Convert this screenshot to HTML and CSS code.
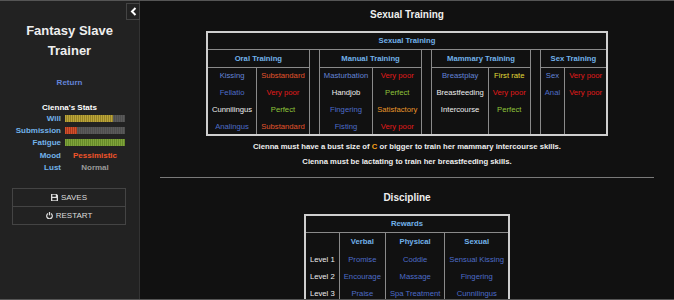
FILE: index.html
```html
<!DOCTYPE html>
<html lang="en">
<head>
    <meta charset="UTF-8">
    <meta name="viewport" content="width=device-width, initial-scale=1.0">
    <title>Fantasy Slave Trainer</title>
    <link rel="stylesheet" href="styles.css">
</head>
<body>

<div class="page">
    <aside class="ui-bar">
        <button class="ui-bar-toggle" title="Toggle">
            <svg width="7" height="9" viewBox="0 0 7 9"><polyline points="5.5,1 2,4.5 5.5,8" fill="none" stroke="#fff" stroke-width="2"/></svg>
        </button>

        <h1 class="story-title">Fantasy Slave<br>Trainer</h1>

        <a class="return-link" href="#">Return</a>

        <div class="stats">
            <h3>Cienna's Stats</h3>
            <div class="stat-grid">
                <span class="stat-label">Will</span>
                <span class="bar"><span class="fill will" style="width: 80%"></span></span>

                <span class="stat-label">Submission</span>
                <span class="bar"><span class="fill submission" style="width: 20%"></span></span>

                <span class="stat-label">Fatigue</span>
                <span class="bar"><span class="fill fatigue" style="width: 100%"></span></span>

                <span class="stat-label">Mood</span>
                <span class="stat-value mood">Pessimistic</span>

                <span class="stat-label">Lust</span>
                <span class="stat-value lust">Normal</span>
            </div>
        </div>

        <nav class="menu">
            <a href="#">
                <svg width="7" height="7" viewBox="0 0 8 8"><path d="M0 0h6.5L8 1.5V8H0z" fill="#ddd"/><rect x="1.5" y="0.8" width="4" height="2.4" fill="#222"/><rect x="1.5" y="4.6" width="5" height="2.6" fill="#222"/></svg>
                SAVES
            </a>
            <a href="#">
                <svg width="7" height="7" viewBox="0 0 8 8"><path d="M2.3 1.8A3.2 3.2 0 1 0 5.7 1.8" fill="none" stroke="#ddd" stroke-width="1.4"/><line x1="4" y1="0" x2="4" y2="3.8" stroke="#ddd" stroke-width="1.4"/></svg>
                RESTART
            </a>
        </nav>
    </aside>

    <main class="passage">
        <h2>Sexual Training</h2>

        <table class="training">
            <tr>
                <th class="table-title" colspan="11">Sexual Training</th>
            </tr>
            <tr>
                <th class="group-head" colspan="2">Oral Training</th>
                <td class="spacer" rowspan="5"></td>
                <th class="group-head" colspan="2">Manual Training</th>
                <td class="spacer" rowspan="5"></td>
                <th class="group-head" colspan="2">Mammary Training</th>
                <td class="spacer" rowspan="5"></td>
                <th class="group-head" colspan="2">Sex Training</th>
            </tr>
            <tr>
                <td><a href="#">Kissing</a></td><td class="substandard">Substandard</td>
                <td><a href="#">Masturbation</a></td><td class="very-poor">Very poor</td>
                <td><a href="#">Breastplay</a></td><td class="first-rate">First rate</td>
                <td><a href="#">Sex</a></td><td class="very-poor">Very poor</td>
            </tr>
            <tr>
                <td><a class="dark" href="#">Fellatio</a></td><td class="very-poor">Very poor</td>
                <td>Handjob</td><td class="perfect">Perfect</td>
                <td>Breastfeeding</td><td class="very-poor">Very poor</td>
                <td><a class="dark" href="#">Anal</a></td><td class="very-poor">Very poor</td>
            </tr>
            <tr>
                <td>Cunnilingus</td><td class="perfect">Perfect</td>
                <td><a class="dark" href="#">Fingering</a></td><td class="satisfactory">Satisfactory</td>
                <td>Intercourse</td><td class="perfect">Perfect</td>
                <td></td><td></td>
            </tr>
            <tr>
                <td><a class="dark" href="#">Analingus</a></td><td class="substandard">Substandard</td>
                <td><a class="dark" href="#">Fisting</a></td><td class="very-poor">Very poor</td>
                <td></td><td></td>
                <td></td><td></td>
            </tr>
        </table>

        <p class="note first">Cienna must have a bust size of <span class="cup">C</span> or bigger to train her mammary intercourse skills.</p>
        <p class="note">Cienna must be lactating to train her breastfeeding skills.</p>

        <hr>

        <h2>Discipline</h2>

        <table class="rewards">
            <tr>
                <th class="table-title" colspan="4">Rewards</th>
            </tr>
            <tr>
                <td></td>
                <th>Verbal</th>
                <th>Physical</th>
                <th>Sexual</th>
            </tr>
            <tr>
                <td>Level 1</td>
                <td><a class="dark" href="#">Promise</a></td>
                <td><a class="dark" href="#">Coddle</a></td>
                <td><a class="dark" href="#">Sensual Kissing</a></td>
            </tr>
            <tr>
                <td>Level 2</td>
                <td><a class="dark" href="#">Encourage</a></td>
                <td><a class="dark" href="#">Massage</a></td>
                <td><a class="dark" href="#">Fingering</a></td>
            </tr>
            <tr>
                <td>Level 3</td>
                <td><a class="dark" href="#">Praise</a></td>
                <td><a class="dark" href="#">Spa Treatment</a></td>
                <td><a class="dark" href="#">Cunnilingus</a></td>
            </tr>
        </table>
    </main>
</div>

</body>
</html>
```

FILE: styles.css
```css
html, body {
    margin: 0;
    padding: 0;
    height: 100%;
    overflow: hidden;
}

body {
    font-family: "Liberation Sans", Arial, sans-serif;
    background-color: #111;
    color: #eee;
}

a {
    color: #6384d8;
    text-decoration: none;
}

a.dark {
    color: #4d6cc8;
}

.page {
    display: flex;
    height: 300px;
    box-sizing: border-box;
    border-top: 1px solid #555;
    border-bottom: 1px solid #555;
    overflow: hidden;
}

/* barra lateral */
.ui-bar {
    position: relative;
    width: 140px;
    flex-shrink: 0;
    background-color: #222;
    border-right: 1px solid #333;
    box-sizing: border-box;
    font-size: 8px;
    text-align: center;
}

.ui-bar-toggle {
    position: absolute;
    top: 2px;
    right: -1px;
    width: 14px;
    height: 17px;
    padding: 0;
    background-color: #222;
    border: 1px solid #444;
    display: flex;
    align-items: center;
    justify-content: center;
    cursor: pointer;
}

.story-title {
    margin: 0;
    padding-top: 20px;
    font-size: 13px;
    line-height: 20px;
    font-weight: bold;
    color: #eee;
}

.return-link {
    display: block;
    margin-top: 16px;
    line-height: 12px;
    font-weight: bold;
}

.stats h3 {
    margin: 14px 0 0;
    font-size: 8px;
    line-height: 9px;
    color: #fff;
}

.stat-grid {
    display: grid;
    grid-template-columns: 61px 60px;
    column-gap: 4px;
    grid-auto-rows: 12.3px;
    align-items: center;
    font-weight: bold;
}

.stat-label {
    text-align: right;
    color: #72b2ea;
}

.bar {
    display: block;
    height: 7px;
    background: repeating-linear-gradient(90deg, #5a5a5a 0 1px, #4e4e4e 1px 2px);
}

.fill {
    display: block;
    height: 100%;
}

.fill.will {
    background: repeating-linear-gradient(90deg, #bba53a 0 1px, #958226 1px 2px);
}

.fill.submission {
    background: repeating-linear-gradient(90deg, #d2502c 0 1px, #a8381c 1px 2px);
}

.fill.fatigue {
    background: repeating-linear-gradient(90deg, #7fa33a 0 1px, #668a2a 1px 2px);
}

.stat-value {
    text-align: center;
}

.stat-value.mood {
    color: #f0542a;
}

.stat-value.lust {
    color: #9a9a9a;
}

.menu {
    display: flex;
    flex-direction: column;
    margin: 15px 13px 0 12px;
}

.menu a {
    display: flex;
    align-items: center;
    justify-content: center;
    gap: 3px;
    height: 17px;
    border: 1px solid #444;
    color: #ddd;
    font-size: 8px;
}

.menu a + a {
    border-top: none;
}

/* pasaje principal */
.passage {
    flex: 1;
    padding: 7px 20px 0;
    font-size: 7.7px;
    display: flex;
    flex-direction: column;
    align-items: center;
}

.passage h2 {
    margin: 0 0 9px;
    font-size: 10px;
    line-height: 14px;
    font-weight: bold;
    color: #eee;
}

table {
    border-collapse: collapse;
    border: 2px solid #cfcfcf;
    flex-shrink: 0;
}

th, td {
    height: 17px;
    padding: 0 4px;
    line-height: 11px;
    text-align: center;
    white-space: nowrap;
    box-sizing: border-box;
}

td {
    color: #eee;
}

th {
    color: #72b2ea;
    font-weight: bold;
}

.table-title {
    height: 17px;
    border-bottom: 1px solid #8a8a8a;
}

.training .group-head {
    height: 18px;
    border: 1px solid #8a8a8a;
    border-top: none;
}

.rewards tr:nth-child(2) > * {
    height: 19px;
}

.training td {
    border-left: 1px solid #8a8a8a;
    border-right: 1px solid #8a8a8a;
}

.training .spacer {
    width: 10px;
    padding: 0;
}

.substandard { color: #e2542c; }
.very-poor { color: #e21a1a; }
.perfect { color: #8fc53a; }
.satisfactory { color: #e8952a; }
.first-rate { color: #e2dd38; }

.note {
    margin: 0;
    line-height: 15px;
    font-weight: bold;
    color: #eee;
    text-align: center;
}

.note.first {
    margin-top: 3px;
}

.cup {
    color: #f7a11c;
}

hr {
    align-self: stretch;
    margin: 8px 0 13px;
    border: none;
    border-top: 1px solid #7a7a7a;
}

.rewards td, .rewards th {
    border-left: 1px solid #8a8a8a;
    border-right: 1px solid #8a8a8a;
}
```
